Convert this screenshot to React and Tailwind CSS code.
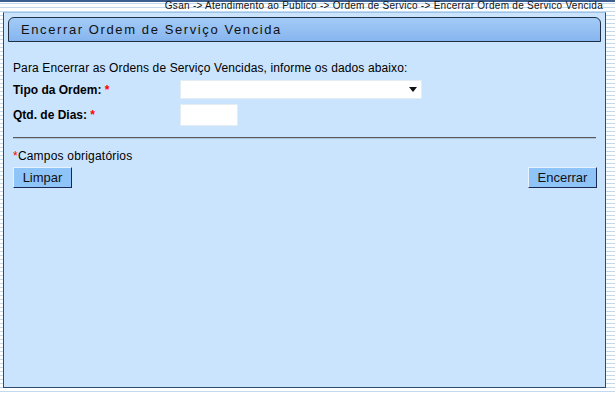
export default function App() {
  return (
    <div
      className="relative h-[394px] w-full overflow-hidden bg-[repeating-linear-gradient(to_bottom,#ffffff_0px,#ffffff_3px,#c3d9ee_3px,#c3d9ee_4px)] text-black"
      style={{ fontFamily: '"Liberation Sans", Arial, sans-serif' }}
    >
      <div className="h-[2px] w-full bg-[#3d5f8f]" />
      <div className="flex h-[10px] justify-end pr-[12px]">
        <div className="-mt-[1px] text-[10px] leading-[10px] tracking-[0.28px] text-[#111]">
          Gsan -&gt; Atendimento ao Publico -&gt; Ordem de Servico -&gt;{" "}
          <span className="border-t-[2px] border-[#f2d84b]">Encerrar Ordem de Servico Vencida</span>
        </div>
      </div>
      <div className="ml-[3px] flex h-[376px] w-[603px] flex-col border border-[#2f4a6b] border-t-[#9fc3e8] bg-[#cbe4fd] px-[4px] pt-[4px]">
        <div className="flex h-[25px] items-center rounded-t-[6px] border border-[#1f2f44] bg-[linear-gradient(to_bottom,#a3cbf7,#86b5ee)] pl-[12px]">
          <span className="text-[13px] tracking-[1.6px] text-[#111]">
            Encerrar Ordem de Serviço Vencida
          </span>
        </div>
        <div className="px-[5px] pt-[19px] text-[12px] leading-[14px]">
          <div className="tracking-[0.12px]">Para Encerrar as Ordens de Serviço Vencidas, informe os dados abaixo:</div>
          <div className="mt-[5px] flex items-center">
            <div className="w-[167px] font-bold">
              Tipo da Ordem: <span className="text-[#ff0000]">*</span>
            </div>
            <div className="flex h-[19px] w-[242px] items-center justify-end border border-[#e4ecf4] bg-white pr-[4px]">
              <svg width="8" height="5" viewBox="0 0 8 5">
                <path d="M0 0 H8 L4 5 Z" fill="#111" />
              </svg>
            </div>
          </div>
          <div className="mt-[5px] flex items-center">
            <div className="w-[167px] font-bold">
              Qtd. de Dias: <span className="text-[#ff0000]">*</span>
            </div>
            <div className="h-[22px] w-[58px] border border-[#e4ecf4] bg-white" />
          </div>
          <div className="mt-[11px] h-[2px] w-[583px] border-t border-b border-t-[#595959] border-b-[#a9c4dc]" />
          <div className="mt-[10px] tracking-[0.2px]">
            <span className="text-[#ff0000]">*</span>Campos obrigatórios
          </div>
          <div className="mt-[4px] flex w-[584px] justify-between">
            <button className="h-[21px] w-[59px] border border-t-[#e6f2ff] border-l-[#e6f2ff] border-r-[#1b2a55] border-b-[#1b2a55] bg-[#8fc4f8] text-[13px] leading-[18px] text-[#111]">
              Limpar
            </button>
            <button className="h-[21px] w-[69px] border border-t-[#e6f2ff] border-l-[#e6f2ff] border-r-[#1b2a55] border-b-[#1b2a55] bg-[#8fc4f8] text-[13px] leading-[18px] text-[#111]">
              Encerrar
            </button>
          </div>
        </div>
      </div>
    </div>
  );
}
